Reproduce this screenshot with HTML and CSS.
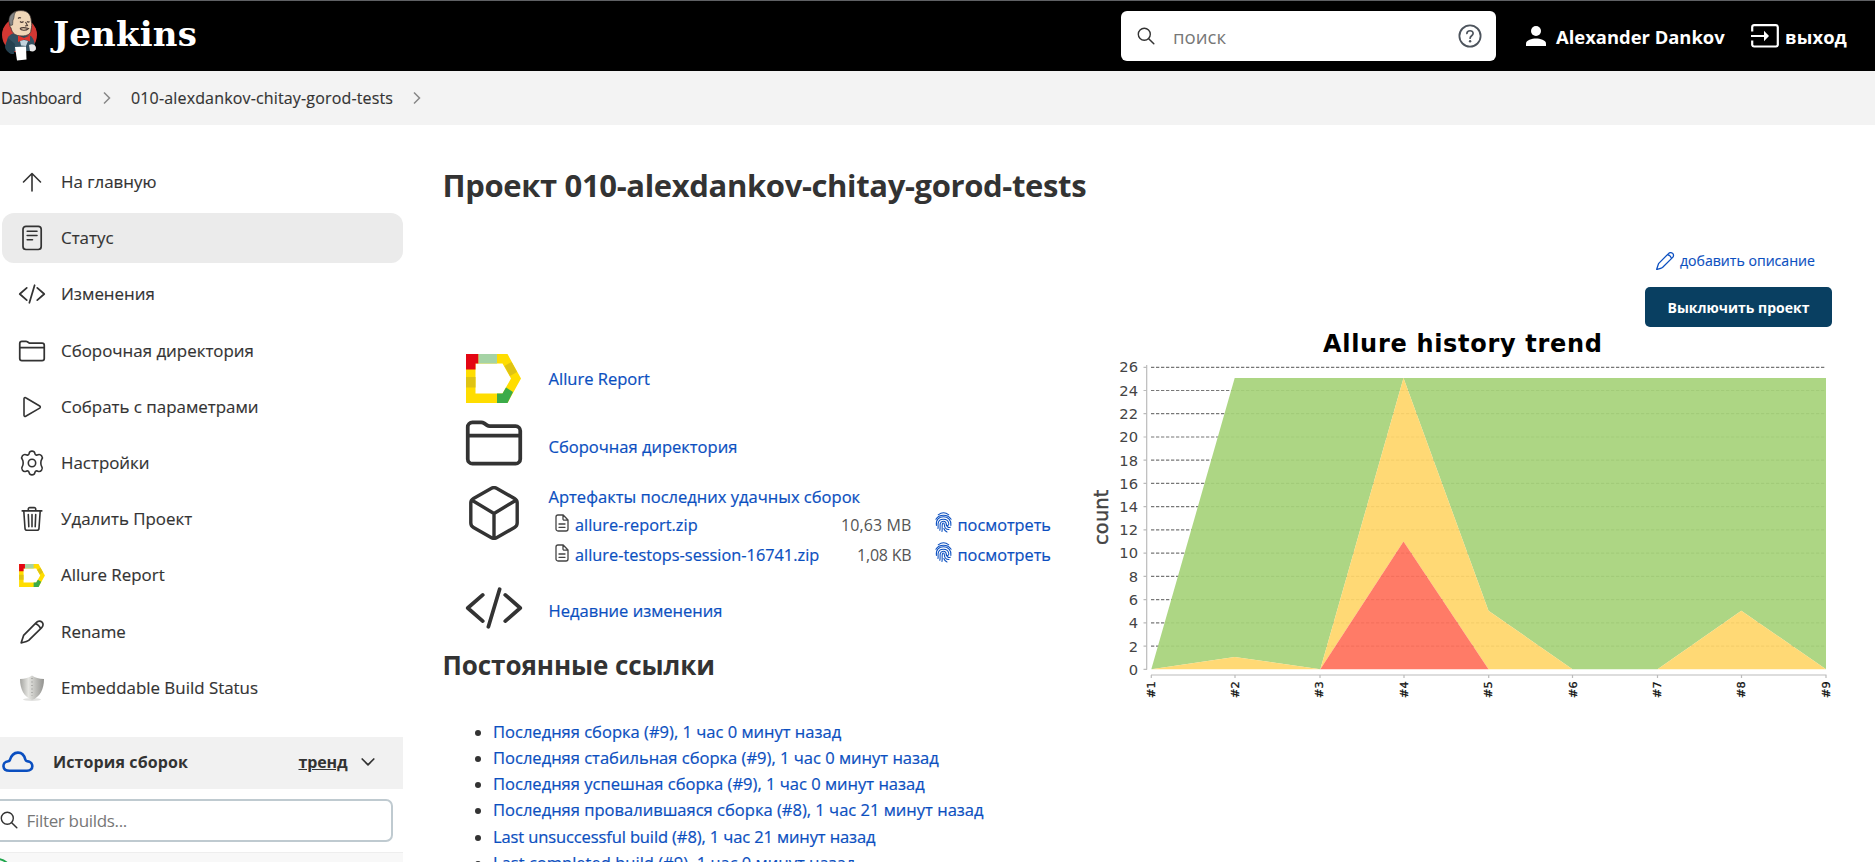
FILE: index.html
```html
<!DOCTYPE html>
<html lang="ru">
<head>
<meta charset="utf-8">
<title>010-alexdankov-chitay-gorod-tests [Jenkins]</title>
<link rel="stylesheet" href="styles.css">
</head>
<body>
<svg class="defs" width="0" height="0">
  <symbol id="folder" viewBox="0 0 512 512"><path d="M440 432H72a40 40 0 01-40-40V120a40 40 0 0140-40h75.890a40 40 0 0122.190 6.720l27.840 18.560a40 40 0 0022.190 6.720H440a40 40 0 0140 40v240a40 40 0 01-40 40zM32 192h448" fill="none" stroke="currentColor" stroke-linecap="round" stroke-linejoin="round" stroke-width="32"/></symbol>
  <symbol id="code" viewBox="0 0 512 512"><path d="M160 368L32 256l128-112M352 368l128-112-128-112M304 96l-96 320" fill="none" stroke="currentColor" stroke-linecap="round" stroke-linejoin="round" stroke-width="32"/></symbol>
  <symbol id="pencil" viewBox="0 0 26 26"><path d="M2.200 23.800L4.600 16.400L17.500 3.400C19 1.700 21.400 1.600 23 3.100C24.500 4.600 24.400 7 22.700 8.600L9.700 21.400C7.600 23 5 23.200 2.200 23.800ZM16.400 4.600C18.400 5.200 21 7.600 21.500 9.700" fill="none" stroke="currentColor" stroke-width="1.700" stroke-linejoin="round"/></symbol>
  <symbol id="search" viewBox="0 0 18 18"><circle cx="7.300" cy="7.300" r="6" fill="none" stroke="currentColor" stroke-width="1.400"/><path d="M11.700 11.700L16.800 16.800" stroke="currentColor" stroke-width="1.500" stroke-linecap="round"/></symbol>
  <symbol id="allure" viewBox="0 0 55 49">
    <path fill="#ffdd00" d="M0 0H41.500L55 24.500L41.500 49H0ZM9.500 9.500V39.500H36.500L45 24.500L36.500 9.500Z" fill-rule="evenodd"/>
    <path fill="#e30613" d="M0 0H12.500V9.500H9.500V15.500H0Z"/>
    <path fill="#a5d3a5" d="M12.500 0H31V9.500H12.500Z"/>
    <path fill="#dfc313" d="M0 23H9.500V33.500H0ZM38.500 12L45.500 8L51 18L44 22Z"/>
    <path fill="#3bab49" d="M31 39.500H36.500L40 33.500L47 38L41.500 49H31Z"/>
  </symbol>
  <symbol id="chevron" viewBox="0 0 8 14"><path d="M1 1.500L6.500 7L1 12.500" fill="none" stroke="#888" stroke-width="1.500"/></symbol>
  <symbol id="file" viewBox="0 0 14 18"><path d="M3 1H8.200L13 6V15A2 2 0 0111 17H3A2 2 0 011 15V3A2 2 0 013 1ZM8 1V5A1.200 1.200 0 009.200 6.200H13M4 10H10M4 13.300H10" fill="none" stroke="#444" stroke-width="1.300" stroke-linecap="round" stroke-linejoin="round"/></symbol>
  <symbol id="finger" viewBox="0 0 17 21"><g fill="none" stroke="currentColor" stroke-width="1.050" stroke-linecap="round"><path d="M3.200 2.800C6.500.300 10.500.300 13.800 2.800"/><path d="M.900 7.200C4 1.800 13 1.800 16.100 7.200"/><path d="M1.400 13.500C.700 7.500 4 4.800 8.500 4.800S16.500 8 15.900 13.500"/><path d="M3 16.500C3.400 14 2.800 12.500 3.200 11C4 5.800 13 5.800 13.800 11.500C14 13.500 12 14.500 11 13"/><path d="M4.800 18.300C5.500 15.500 4.800 13.500 5.300 11.500C6.200 8.200 11 8.400 11.300 12C11.600 15 13.500 16 15.300 15.200"/><path d="M7 19.500C7.500 16.500 6.800 14 7.400 12C8 10.500 9.200 11 9.300 12.500C9.500 15.800 11.300 17.600 14 17.500"/><path d="M8.900 16.500C9.500 18.500 10.500 19.500 12 20"/></g></symbol>
</svg>

<header class="header">
  <div class="brand">
    <svg class="brand-icon" width="38" height="52" viewBox="0 0 38 52">
      <circle cx="19.500" cy="25" r="17.500" fill="#d33833"/>
      <path d="M8 27C11 24 14 22 17 24L31 26C34 29 35 33 35 38L31 41H14L13 44C8 44 6 39 6 35Z" fill="#335061"/>
      <path d="M8 28L5 36C5 40 8 43 14 44L15 34Z" fill="#25404f"/>
      <path d="M9.500 12C9 4 14 .600 21 .600C28 .600 31 5 31.300 11C32 14 31.800 17 31 20C31 24 27 26 22 26C15 26 12 23 11 18C9.500 16 9.300 14 9.500 12Z" fill="#f0d6b7" stroke="#3a3030" stroke-width=".8"/>
      <path d="M9 12C8.500 6 11.500 3 15.500 2C13.500 5 14.500 7 13.500 9C12.500 10 13 13 12.500 15L10.500 15.500Z" fill="#838383" stroke="#333" stroke-width=".6"/>
      <path d="M18 8.500C19 7.500 20 7.500 21 8M20 11.500C21 12.500 22.500 12.500 23.500 11.500M27 11.500C28 12.300 29 12 29.500 11.500M25.500 12L27.500 15.500L25 16M20 18.500C22 17 25 17.500 28.500 18.500C26 21 21 20.500 20 18.500" fill="none" stroke="#4a3a35" stroke-width="1.100"/>
      <path d="M18 25.500L24 28L30 25.500V31.500L24.500 29.500L18 32Z" fill="#e0342c"/>
      <path d="M20 31L24 30L28 31L26 36L21 35.500Z" fill="#c3d3dd"/>
      <path d="M15 37L26 36.500L26.500 49.500L17 50.500Z" fill="#fff"/>
      <path d="M29 35C32 33 36 35 36 38C36 41 33 42 30 41Z" fill="#e8e8e8"/>
    </svg>
    <span class="brand-name">Jenkins</span>
  </div>
  <div class="header-right">
    <div class="search">
      <svg width="18" height="18" class="dark"><use href="#search"/></svg>
      <span class="search-text">поиск</span>
      <svg width="24" height="24" viewBox="0 0 24 24"><circle cx="12" cy="12" r="10.600" fill="none" stroke="#4d545d" stroke-width="1.800"/><path d="M8.900 9.500C9 5.800 15.200 5.900 15.100 9.400C15 11.800 12.100 11.700 12.100 14.200" fill="none" stroke="#4d545d" stroke-width="1.700" stroke-linecap="round"/><circle cx="12.100" cy="17.300" r="1.200" fill="#4d545d"/></svg>
    </div>
    <a class="user">
      <svg width="20" height="20" viewBox="0 0 20 20" fill="#fff"><circle cx="10" cy="5" r="5"/><path d="M0 20V17.500C0 14.200 6 12.500 10 12.500S20 14.200 20 17.500V20Z"/></svg>
      <span>Alexander Dankov</span>
    </a>
    <a class="logout">
      <svg width="28" height="24" viewBox="0 0 28 24"><path d="M1.200 7.500V3A2 2 0 013.200 1.200H25A2 2 0 0126.800 3V21A2 2 0 0125 22.500H3.200A2 2 0 011.200 21V16.500" fill="none" stroke="#fff" stroke-width="2.200"/><path d="M0 12H14" stroke="#fff" stroke-width="2"/><path d="M13 6.800L18 12L13 17.200Z" fill="#fff"/></svg>
      <span>выход</span>
    </a>
  </div>
</header>

<nav class="crumbs">
  <span class="crumb-home">Dashboard</span>
  <svg width="8" height="14"><use href="#chevron"/></svg>
  <span class="crumb-job">010-alexdankov-chitay-gorod-tests</span>
  <svg width="8" height="14"><use href="#chevron"/></svg>
</nav>

<div class="page">
  <aside class="side">
    <div class="tasks">
      <a class="task"><svg width="26" height="26" viewBox="0 0 26 26"><path d="M13 22V4.500M4.500 13L13 4.500L21.500 13" fill="none" stroke="currentColor" stroke-width="1.600" stroke-linecap="round" stroke-linejoin="round"/></svg><span>На главную</span></a>
      <a class="task active"><svg width="26" height="26" viewBox="0 0 26 26"><rect x="4" y="1.300" width="18.200" height="23.200" rx="3" fill="none" stroke="currentColor" stroke-width="1.700"/><path d="M8.200 6.200H18M8.200 10.500H18M8.200 14.800H13.500" stroke="currentColor" stroke-width="1.600" stroke-linecap="round"/></svg><span>Статус</span></a>
      <a class="task"><svg width="28" height="28"><use href="#code"/></svg><span>Изменения</span></a>
      <a class="task"><svg width="28" height="28"><use href="#folder"/></svg><span>Сборочная директория</span></a>
      <a class="task"><svg width="26" height="26" viewBox="0 0 26 26"><path d="M5 4.700V21.300C5 22.300 5.900 22.800 6.700 22.300L20.700 14.100C21.500 13.600 21.500 12.500 20.700 12L6.700 3.700C5.900 3.200 5 3.700 5 4.700Z" fill="none" stroke="currentColor" stroke-width="1.600"/></svg><span>Собрать с параметрами</span></a>
      <a class="task"><svg width="26" height="26" viewBox="0 0 26 26"><path d="M10.200 3.200C10.800.400 15.200.400 15.800 3.200C16.300 5 17.500 5.500 19 4.700C21.900 3.600 24.300 7.300 22.800 9.300C21.500 11 21.500 14.900 22.800 16.700C24.300 18.700 21.900 22.400 19 21.300C17.500 20.500 16.300 21 15.800 22.800C15.200 25.600 10.800 25.600 10.200 22.800C9.700 21 8.500 20.500 7 21.300C4.100 22.400 1.700 18.700 3.200 16.700C4.500 14.900 4.500 11 3.200 9.300C1.700 7.300 4.100 3.600 7 4.700C8.500 5.500 9.700 5 10.200 3.200Z" fill="none" stroke="currentColor" stroke-width="1.600"/><circle cx="13" cy="13" r="3.700" fill="none" stroke="currentColor" stroke-width="1.600"/></svg><span>Настройки</span></a>
      <a class="task"><svg width="26" height="26" viewBox="0 0 26 26"><path d="M3.200 4.900H22.800M9.300 4.900V3.200A1.500 1.500 0 0110.800 1.600H15.200A1.500 1.500 0 0116.700 3.200V4.900M4.800 5L6 22.200A2 2 0 008 24.200H18A2 2 0 0020 22.200L21.200 5M9.300 8.500L9.800 20.700M13 8.500V20.700M16.700 8.500L16.200 20.700" fill="none" stroke="currentColor" stroke-width="1.600" stroke-linecap="round"/></svg><span>Удалить Проект</span></a>
      <a class="task"><svg width="26" height="23"><use href="#allure"/></svg><span>Allure Report</span></a>
      <a class="task"><svg width="26" height="26"><use href="#pencil"/></svg><span>Rename</span></a>
      <a class="task"><svg width="26" height="26" viewBox="0 0 26 26"><defs><linearGradient id="steel"><stop offset="0" stop-color="#a4a4a0"/><stop offset=".35" stop-color="#e6e6e2"/><stop offset=".6" stop-color="#c6c6c2"/><stop offset="1" stop-color="#92928f"/></linearGradient></defs><ellipse cx="13" cy="24.500" rx="9" ry="1.500" fill="#e2e2e0"/><path d="M1 4C6 4 10 2.500 13 .500C16 2.500 20 4 25 4C25 14 21 22 13 25C5 22 1 14 1 4Z" fill="url(#steel)"/><path d="M13 3V21" stroke="#8b8b88" stroke-dasharray="1 2.500"/></svg><span>Embeddable Build Status</span></a>
    </div>
    <div class="history">
      <svg width="32" height="22" viewBox="0 0 32 22"><path d="M7.500 19.800C-.200 19.800-.400 11 6.200 10.300C7 10.200 7.600 9.800 7.900 9C10.800-.700 21-.900 23.300 8.500C23.500 9.400 24.100 10 25 10.100C32.200 10.600 32 19.800 25 19.800Z" fill="none" stroke="#0b4fc0" stroke-width="2.600"/></svg>
      <span class="history-title">История сборок</span>
      <a class="trend">тренд</a>
      <svg width="14" height="10" viewBox="0 0 14 10"><path d="M1.200 2L7 7.800L12.800 2" fill="none" stroke="#333" stroke-width="1.700" stroke-linecap="round" stroke-linejoin="round"/></svg>
    </div>
    <div class="filter"><svg width="18" height="18" class="dark"><use href="#search"/></svg><span>Filter builds...</span></div>
    <div class="build"><span class="build-dot"></span></div>
  </aside>

  <main class="main">
    <h1>Проект 010-alexdankov-chitay-gorod-tests</h1>
    <div class="columns">
      <div class="left">
        <div class="link-row r-allure"><svg width="55" height="49"><use href="#allure"/></svg><a>Allure Report</a></div>
        <div class="link-row r-folder"><svg width="60" height="60"><use href="#folder"/></svg><a>Сборочная директория</a></div>
        <div class="link-row r-box">
          <svg width="50" height="54" viewBox="0 0 50 54"><path d="M22.500 2.300L4.500 12.500C2.800 13.500 1.800 14.800 1.800 16.800V37C1.800 39 2.800 40.500 4.500 41.500L22.500 51.700C24.300 52.700 25.700 52.700 27.500 51.700L45.500 41.500C47.200 40.500 48.200 39 48.200 37V16.800C48.200 14.800 47.200 13.500 45.500 12.500L27.500 2.300C25.700 1.300 24.300 1.300 22.500 2.300ZM3 14.200L25 27.500L47 14.200M25 27.500V52" fill="none" stroke="currentColor" stroke-width="3.400" stroke-linejoin="round"/></svg>
          <div class="artifacts">
            <a class="art-title">Артефакты последних удачных сборок</a>
            <div class="art"><svg width="14" height="18"><use href="#file"/></svg><a class="art-name">allure-report.zip</a><span class="size">10,63 MB</span><svg class="blue" width="17" height="21"><use href="#finger"/></svg><a class="view">посмотреть</a></div>
            <div class="art"><svg width="14" height="18"><use href="#file"/></svg><a class="art-name">allure-testops-session-16741.zip</a><span class="size size-kb">1,08 KB</span><svg class="blue" width="17" height="21"><use href="#finger"/></svg><a class="view">посмотреть</a></div>
          </div>
        </div>
        <div class="link-row r-code"><svg width="60" height="60"><use href="#code"/></svg><a>Недавние изменения</a></div>
        <h2>Постоянные ссылки</h2>
        <ul class="permalinks">
          <li><a>Последняя сборка (#9), 1 час 0 минут назад</a></li>
          <li><a>Последняя стабильная сборка (#9), 1 час 0 минут назад</a></li>
          <li><a>Последняя успешная сборка (#9), 1 час 0 минут назад</a></li>
          <li><a>Последняя провалившаяся сборка (#8), 1 час 21 минут назад</a></li>
          <li><a class="en">Last unsuccessful build (#8), 1 час 21 минут назад</a></li>
          <li><a>Last completed build (#9), 1 час 0 минут назад</a></li>
        </ul>
      </div>
      <div class="right">
        <a class="describe"><svg width="20" height="20"><use href="#pencil"/></svg><span>добавить описание</span></a>
        <button class="disable">Выключить проект</button>
        <svg class="chart" width="742" height="380" viewBox="1090 327 742 380">
          <text class="chart-title" x="1323" y="351.700" textLength="279">Allure history trend</text>
          <text class="chart-count" transform="translate(1108 545) rotate(-90)" textLength="55.500">count</text>
          <path class="grid" d="M1151 367.300H1825M1151 390.500H1825M1151 413.700H1825M1151 437H1825M1151 460.200H1825M1151 483.400H1825M1151 506.700H1825M1151 529.900H1825M1151 553.200H1825M1151 576.400H1825M1151 599.600H1825M1151 622.800H1825M1151 646.100H1825"/>
          <path fill="#a6d37a" fill-opacity=".92" d="M1151.300 669.300L1234.700 378H1826V669.300L1741.300 610.700L1657.500 669.300H1572.500L1488.500 610.700L1403.500 378L1320.300 669.300L1234.700 657Z"/>
          <path fill="#ffd669" fill-opacity=".92" d="M1151.300 669.300L1234.700 657L1320.300 669.300L1403.500 378L1488.500 610.700L1572.500 669.300H1488.500L1403.500 541.500L1320.300 669.300ZM1657.500 669.300L1741.300 610.700L1826 669.300Z"/>
          <path fill="#ff705a" fill-opacity=".92" d="M1320.300 669.300L1403.500 541.500L1488.500 669.300Z"/>
          <path class="axis" d="M1146.700 365V669.500M1151 675H1826.500M1143.500 367.300H1147M1143.500 390.500H1147M1143.500 413.700H1147M1143.500 437H1147M1143.500 460.200H1147M1143.500 483.400H1147M1143.500 506.700H1147M1143.500 529.900H1147M1143.500 553.200H1147M1143.500 576.400H1147M1143.500 599.600H1147M1143.500 622.800H1147M1143.500 646.100H1147M1143.500 669.300H1147M1151.300 675V678M1235 675V678M1320 675V678M1404 675V678M1488.700 675V678M1572.500 675V678M1657.500 675V678M1741.500 675V678M1826 675V678"/>
          <g class="y-labels">
            <text x="1138" y="372.300">26</text><text x="1138" y="395.500">24</text><text x="1138" y="419.300">22</text><text x="1138" y="442">20</text><text x="1138" y="465.700">18</text><text x="1138" y="488.700">16</text><text x="1138" y="511.700">14</text><text x="1138" y="535.300">12</text><text x="1138" y="558.300">10</text><text x="1138" y="581.700">8</text><text x="1138" y="605">6</text><text x="1138" y="628">4</text><text x="1138" y="651.700">2</text><text x="1138" y="674.700">0</text>
          </g>
          <g class="x-labels">
            <text transform="translate(1154.500 698) rotate(-90)">#1</text><text transform="translate(1239 698) rotate(-90)">#2</text><text transform="translate(1323 698) rotate(-90)">#3</text><text transform="translate(1407.500 698) rotate(-90)">#4</text><text transform="translate(1491.500 698) rotate(-90)">#5</text><text transform="translate(1576.500 698) rotate(-90)">#6</text><text transform="translate(1660.500 698) rotate(-90)">#7</text><text transform="translate(1745 698) rotate(-90)">#8</text><text transform="translate(1829.500 698) rotate(-90)">#9</text>
          </g>
        </svg>
      </div>
    </div>
  </main>
</div>
</body>
</html>
```
FILE: styles.css
```css
* { box-sizing: border-box; }
body { margin: 0; height: 862px; overflow: hidden; background: #fff; color: #333; font: 500 16px/26px "Open Sans", "Noto Sans", sans-serif; }
svg { flex: none; display: block; }
span, a { white-space: nowrap; }
.defs { position: absolute; }
.dark { color: #333; }
.blue { color: #0b4fc0; }

.header { height: 71px; background: #000; border-top: 1px solid #5f6164; display: flex; align-items: center; justify-content: space-between; color: #fff; }
.brand { display: flex; align-items: center; gap: 15px; }
.brand-name { font: bold 34px/40px "DejaVu Serif", serif; letter-spacing: .18px; margin-top: -4px; }
.header-right { display: flex; align-items: center; font-weight: 700; font-size: 18.400px; }
.search { width: 375px; height: 50px; border-radius: 6px; background: #fff; display: flex; align-items: center; padding: 0 14px 0 16px; margin-right: 30px; }
.search-text { color: #777; font-size: 18.600px; font-weight: 400; margin: 2px 0 0 18px; flex: 1; }
.user { display: flex; align-items: center; gap: 10px; width: 225px; }
.logout { display: flex; align-items: center; gap: 6px; width: 124px; }
.logout span { letter-spacing: .1px; }
.user span, .logout span { margin-top: 1px; }

.crumbs { height: 54px; background: #f3f3f3; display: flex; align-items: center; padding-left: 1px; -webkit-text-stroke: .15px; }
.crumb-home { width: 102px; letter-spacing: -.2px; }
.crumb-job { margin-left: 20px; width: 282px; letter-spacing: .16px; }

.page { display: flex; }
.side { width: 403px; padding-top: 32px; }
.tasks { display: flex; flex-direction: column; gap: 6.200px; padding-left: 2px; font-size: 16.900px; -webkit-text-stroke: .15px; }
.task { height: 50px; display: flex; align-items: center; border-radius: 12px; }
.task svg { margin: 0 16px 0 17px; }
.task svg[width="28"] { margin: 0 15px 0 16px; }
.active { background: #ebebeb; }
.history { margin-top: 24px; height: 52px; background: #f1f1f1; display: flex; align-items: center; font-weight: 700; padding: 0 0 2px 2px; }
.history-title { margin-left: 19px; width: 245.500px; letter-spacing: .11px; }
.trend { text-decoration: underline; width: 49px; margin-right: 13px; letter-spacing: -.13px; }
.filter { margin: 10px 10px 10px -10px; height: 43px; border: 2px solid #bfcad0; border-radius: 7px; display: flex; align-items: center; gap: 8.500px; padding-left: 8px; color: #777; font-weight: 400; font-size: 17px; letter-spacing: -.32px; }
.filter span { margin-top: 2px; }
.build { height: 20px; background: #f8f8f8; border-top: 1px solid #eee; overflow: hidden; padding-top: 5px; }
.build-dot { display: block; width: 26px; height: 26px; margin-left: -15px; border: 2.500px solid #1ea64b; border-radius: 50%; }

.main { margin-left: 41px; flex: 1; padding-top: 40px; }
h1, h2 { margin: 0 0 0 -1.500px; font-weight: 700; white-space: nowrap; }
h1 { font-size: 31px; line-height: 40px; letter-spacing: -.36px; }
h2 { font-size: 26px; line-height: 36px; margin-top: 5px; letter-spacing: -.08px; }
.columns { display: flex; }
.left { width: 646px; padding-top: 145px; }
.left a { color: #0b4fc0; font-size: 16.550px; -webkit-text-stroke: .2px; }
.link-row { display: flex; padding-left: 22px; }
.r-allure { height: 58px; align-items: center; gap: 27.500px; }
.r-allure svg { margin-top: -2px; }
.r-allure a { margin-top: -1px; }
.r-folder { height: 70px; gap: 24.500px; padding-left: 20px; padding-top: 5px; }
.r-folder a { padding-top: 20.500px; }
.r-box { height: 100px; gap: 29.500px; padding-left: 25px; padding-top: 8px; }
.artifacts { display: flex; flex-direction: column; }
.art-title { height: 26px; display: block; margin-top: -2.500px; }
.art { display: flex; align-items: center; height: 30px; padding-left: 6.500px; }
.art > svg { margin-top: -4px; }
.left .art-name { width: 244px; margin: 1px 0 0 6px; font-size: 16.300px; letter-spacing: .02px; }
.size { color: #555; width: 92.500px; margin-top: 1px; text-align: right; font-weight: 400; letter-spacing: .1px; }
.size-kb { letter-spacing: -.2px; }
.art .blue { margin: -5px 6px 0 23px; }
.left .view { margin-top: 1px; font-size: 16.300px; }
.r-code { height: 64px; gap: 24.500px; padding-left: 20px; }
.r-code a { padding-top: 20px; }
.permalinks { margin: 35.800px 0 0; padding-left: 49px; line-height: 26.200px; }
.left .en { letter-spacing: -.13px; }

.right { width: 742px; display: flex; flex-direction: column; align-items: flex-end; padding-top: 43px; }
.describe { display: flex; align-items: center; gap: 5px; color: #0b4fc0; font-size: 14.100px; margin-right: 17px; height: 26px; -webkit-text-stroke: .15px; }
.disable { width: 187px; height: 40px; margin-top: 13px; padding: 1px 0 0; border: 0; border-radius: 5px; background: #093f61; color: #fff; font: 700 14px/20px "Open Sans", sans-serif; }
.chart { font-family: "DejaVu Sans", sans-serif; }
.chart-title { font-size: 24px; font-weight: 700; }
.chart-count { font-size: 19.500px; fill: #444; stroke: #444; stroke-width: .4; }
.grid { stroke: #777; stroke-width: 1.200; stroke-dasharray: 3.300 1.700; }
.axis { fill: none; stroke: #bbb; stroke-width: 1.200; }
.y-labels { font-size: 14.700px; fill: #444; text-anchor: end; }
.x-labels { font-size: 11.300px; fill: #111; stroke: #111; stroke-width: .3; }
```
